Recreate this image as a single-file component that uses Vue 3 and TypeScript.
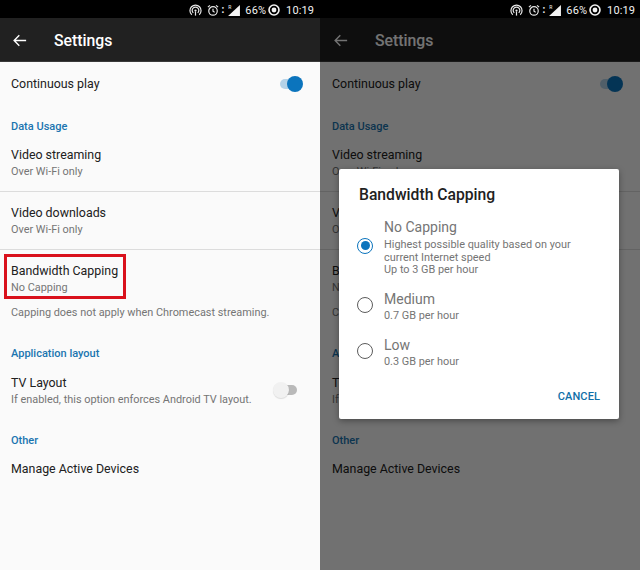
<script setup lang="ts">
interface Row { title: string; sub?: string; note?: string; toggle?: 'on' | 'off'; divider?: boolean; mark?: boolean }
interface Section { header?: string; rows: Row[] }

const sections: Section[] = [
  { rows: [{ title: 'Continuous play', toggle: 'on' }] },
  {
    header: 'Data Usage',
    rows: [
      { title: 'Video streaming', sub: 'Over Wi-Fi only', divider: true },
      { title: 'Video downloads', sub: 'Over Wi-Fi only', divider: true },
      { title: 'Bandwidth Capping', sub: 'No Capping', note: 'Capping does not apply when Chromecast streaming.', mark: true },
    ],
  },
  {
    header: 'Application layout',
    rows: [{ title: 'TV Layout', sub: 'If enabled, this option enforces Android TV layout.', toggle: 'off' }],
  },
  { header: 'Other', rows: [{ title: 'Manage Active Devices' }] },
]

const phones = [{ dialog: false }, { dialog: true }]

const options = [
  { name: 'No Capping', lines: ['Highest possible quality based on your', 'current Internet speed', 'Up to 3 GB per hour'], checked: true },
  { name: 'Medium', lines: ['0.7 GB per hour'], checked: false },
  { name: 'Low', lines: ['0.3 GB per hour'], checked: false },
]
</script>

<template>
  <div class="page">
    <div v-for="(phone, i) in phones" :key="i" class="phone" :class="{ shifted: phone.dialog }">
      <div class="status">
        <svg class="ic" width="13" height="13" viewBox="0 0 14 14" fill="none" stroke="#e8e8e8" stroke-width="1.3">
          <path d="M3 11.6A6 6 0 1 1 11 11.6" />
          <path d="M4.6 9.6A3.6 3.6 0 1 1 9.4 9.6" />
          <circle cx="7" cy="7" r="1.2" fill="#e8e8e8" stroke="none" />
          <path d="M7 8v4.5" />
        </svg>
        <svg class="ic alarm" width="12" height="13" viewBox="0 0 13 14" fill="none" stroke="#e8e8e8" stroke-width="1.3">
          <circle cx="6.5" cy="7.5" r="4.6" />
          <path d="M6.5 5v2.8l1.8 1" />
          <path d="M1 3.4 3.2 1.4M12 3.4 9.8 1.4" />
        </svg>
        <span class="dots">:</span>
        <span class="signal">
          <span class="net">R</span>
          <svg width="12" height="11" viewBox="0 0 14 13"><path d="M14 0v13H0z" fill="#f2f2f2" /></svg>
        </span>
        <span class="pct">66%</span>
        <svg class="ic" width="12" height="12" viewBox="0 0 14 14">
          <circle cx="7" cy="7" r="5.8" fill="none" stroke="#f2f2f2" stroke-width="1.9" />
          <circle cx="7" cy="7" r="2.8" fill="#f2f2f2" />
        </svg>
        <span class="time">10:19</span>
      </div>

      <div class="screen">
        <header class="bar">
          <svg width="14" height="13" viewBox="0 0 16 14" fill="none" stroke="#fff" stroke-width="1.6">
            <path d="M15 7H1.5M7.2 1 1.3 7l5.9 6" />
          </svg>
          <span class="bar-title">Settings</span>
        </header>

        <main class="list">
          <section v-for="(s, si) in sections" :key="si">
            <h3 v-if="s.header" class="head">{{ s.header }}</h3>
            <div
              v-for="r in s.rows"
              :key="r.title"
              class="row"
              :class="{ divider: r.divider, plain: !r.sub, 'has-note': r.note }"
            >
              <div class="texts">
                <div class="title">{{ r.title }}</div>
                <div v-if="r.sub" class="sub">{{ r.sub }}</div>
                <div v-if="r.note" class="note">{{ r.note }}</div>
              </div>
              <span v-if="r.toggle" class="toggle" :class="r.toggle"><i></i></span>
              <span v-if="r.mark && !phone.dialog" class="mark"></span>
            </div>
          </section>
        </main>

        <div v-if="phone.dialog" class="scrim">
          <div class="dialog">
            <h2 class="d-title">Bandwidth Capping</h2>
            <div class="opts">
              <div v-for="o in options" :key="o.name" class="opt" :class="{ long: o.lines.length > 1 }">
                <span class="radio" :class="{ checked: o.checked }"></span>
                <div>
                  <div class="o-name">{{ o.name }}</div>
                  <div class="o-lines">
                    <div v-for="l in o.lines" :key="l" class="o-line">{{ l }}</div>
                  </div>
                </div>
              </div>
            </div>
            <div class="actions"><span class="cancel">CANCEL</span></div>
          </div>
        </div>
      </div>
    </div>
  </div>
</template>

<style>
html, body { margin: 0; background: #fafafa; }
</style>

<style scoped>
.page {
  display: flex;
  width: 640px;
  height: 570px;
  overflow: hidden;
  font-family: Roboto, "Liberation Sans", sans-serif;
}
.phone {
  --inset: 11px;
  width: 320px;
  height: 570px;
  display: flex;
  flex-direction: column;
  background: #fafafa;
}
.phone.shifted { --inset: 12px; }

.status {
  height: 18px;
  flex: none;
  background: #000;
  color: #f2f2f2;
  display: flex;
  align-items: center;
  justify-content: flex-end;
  padding: 2px 6px 0 0;
  font-size: 11px;
  box-sizing: border-box;
}
.phone.shifted .status { padding-right: 5px; }
.ic { flex: none; }
.alarm { margin-left: 5px; }
.dots { margin-left: 3px; font-size: 10px; font-weight: 700; line-height: 1; }
.signal { position: relative; display: flex; margin-left: 4px; }
.net { position: absolute; left: 0; top: -1px; font-size: 5px; line-height: 6px; }
.pct { margin-left: 5px; margin-right: 2px; letter-spacing: .1px; }
.time { margin-left: 6px; font-size: 11px; letter-spacing: .1px; }

.screen { position: relative; flex: 1; display: flex; flex-direction: column; min-height: 0; }
.bar {
  height: 44px;
  flex: none;
  background: #212121;
  display: flex;
  align-items: center;
  padding: 2px 0 0 calc(var(--inset) + 2px);
  box-sizing: border-box;
  border-bottom: 1px solid #3a3a3a;
}
.bar-title {
  margin-left: 27px;
  color: #fff;
  font-size: 15.8px;
  font-weight: 500;
}
.list { flex: 1; background: #fafafa; }
.head {
  margin: 0;
  padding: 13px var(--inset) 0;
  height: 40px;
  box-sizing: border-box;
  font-size: 11px;
  line-height: 16px;
  font-weight: 500;
  color: #1a75b0;
}
section:nth-child(3) .head { height: 28px; padding-top: 0; margin-top: 25px; }
section:nth-child(4) .head { height: 28px; padding-top: 0; margin-top: 14px; }
.row {
  position: relative;
  display: flex;
  align-items: center;
  padding: 1px 15px 11px var(--inset);
}
.row.plain { height: 44px; padding-top: 0; padding-bottom: 0; box-sizing: border-box; }
.row.divider { border-bottom: 1px solid #dcdcdc; }
.row.divider + .row { padding-top: 13px; }
.row.has-note { padding-bottom: 0; }
.texts { flex: 1; min-width: 0; }
.title { font-size: 12.4px; line-height: 16px; color: #212121; }
.sub { font-size: 10.9px; line-height: 16px; padding-top: 1px; color: #757575; }
.note { font-size: 10.9px; line-height: 16px; color: #757575; margin-top: 9px; }
.head + .row.plain { height: 16px; }
.mark {
  position: absolute;
  left: 4px;
  top: 4px;
  width: 122px;
  height: 45px;
  box-sizing: border-box;
  border: 3px solid #d9111c;
  pointer-events: none;
}
.toggle {
  position: relative;
  flex: none;
  width: 22px;
  height: 10px;
  border-radius: 5px;
  margin-right: 3px;
}
.toggle i {
  position: absolute;
  top: -3px;
  width: 16px;
  height: 16px;
  border-radius: 50%;
}
.toggle.on { background: #b4d2e8; margin-top: -1px; }
.toggle.on i { right: -1px; background: #0b74bd; }
.toggle.off { background: #b9b9b9; margin-right: 8px; margin-top: -4px; }
.toggle.off i { left: -2px; background: #f1f1f1; box-shadow: 0 1px 1px rgba(0,0,0,.12); }

.scrim {
  position: absolute;
  inset: 0;
  background: rgba(0, 0, 0, .55);
  display: flex;
  align-items: center;
  justify-content: center;
  padding-right: 2px;
}
.dialog {
  width: 280px;
  height: 250px;
  box-sizing: border-box;
  background: #fff;
  border-radius: 2px;
  padding: 17px 19px 0 20px;
  box-shadow: 0 2px 6px rgba(0,0,0,.35);
  display: flex;
  flex-direction: column;
}
.d-title { margin: 0; font-size: 15.7px; line-height: 18px; font-weight: 500; color: #212121; }
.opts { margin-top: 14px; display: flex; flex-direction: column; gap: 12px; }
.opt { display: flex; align-items: center; gap: 11px; margin-left: -2px; }
.opt.long { margin-bottom: 1px; }
.radio {
  flex: none;
  width: 16px;
  height: 16px;
  border-radius: 50%;
  border: 1.5px solid #5c5c5c;
  box-sizing: border-box;
  position: relative;
  margin-top: -4px;
}
.radio.checked { border-color: #0b74bd; }
.radio.checked::after {
  content: "";
  position: absolute;
  inset: 2.5px;
  border-radius: 50%;
  background: #0b74bd;
}
.o-name { font-size: 14px; line-height: 18px; color: #757575; }
.opt.long .o-lines { padding-top: 3px; }
.o-line { font-size: 10.9px; line-height: 12.7px; color: #757575; }
.opt:not(.long) .o-line { line-height: 16px; }
.actions { margin-top: auto; display: flex; justify-content: flex-end; padding-bottom: 15px; }
.cancel { font-size: 11px; line-height: 14px; font-weight: 500; color: #0f6fa8; letter-spacing: .1px; }
</style>
